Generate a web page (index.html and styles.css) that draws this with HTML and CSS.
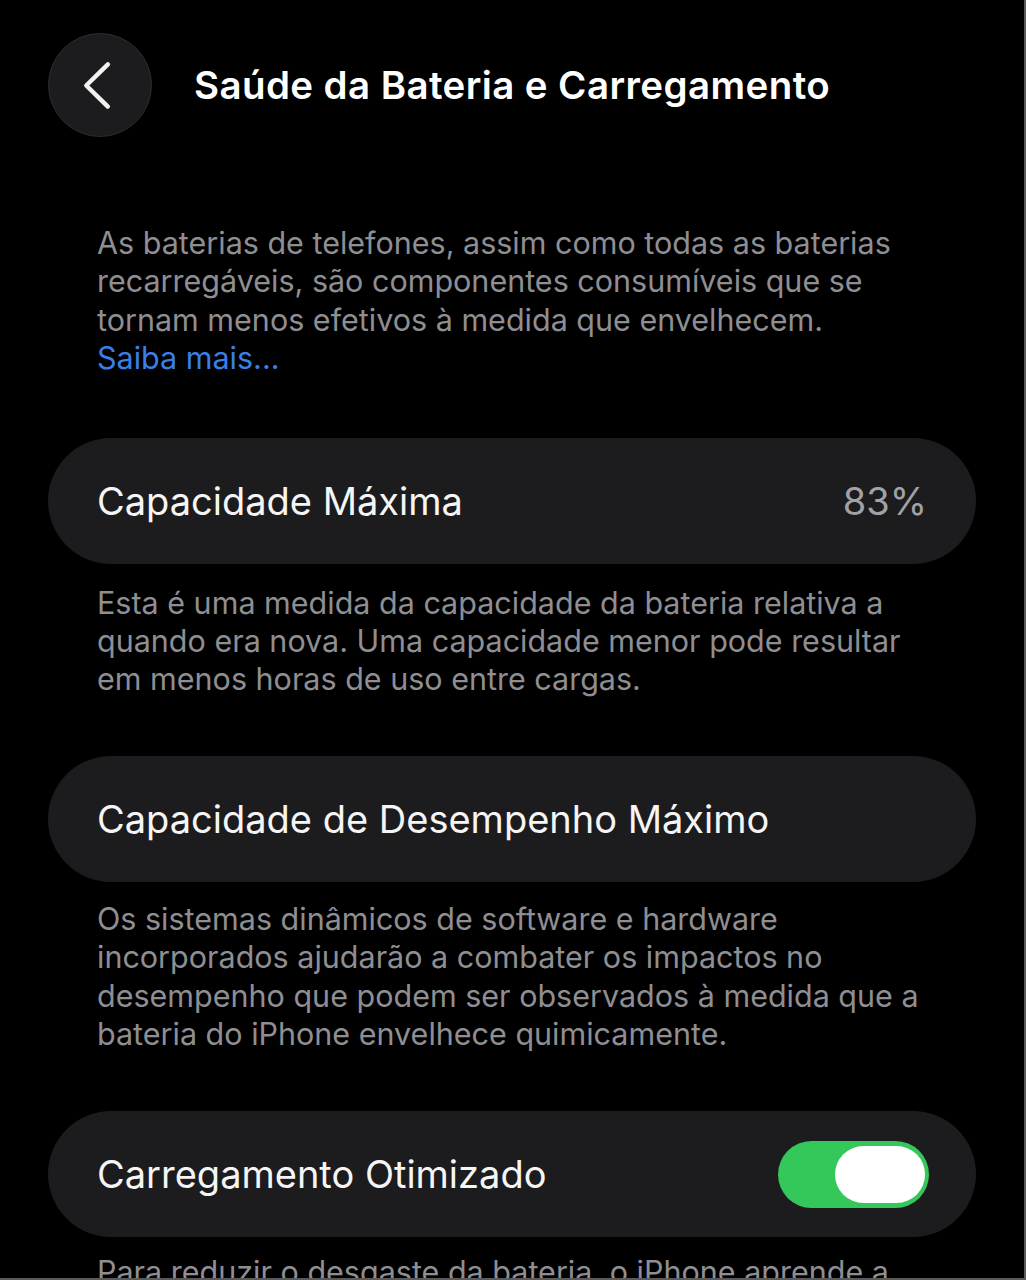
FILE: index.html
```html
<!DOCTYPE html>
<html lang="pt">
<head>
<meta charset="utf-8">
<link rel="stylesheet" href="styles.css">
</head>
<body>
<div class="screen">
  <header class="header">
    <button class="back" aria-label="Voltar">
      <svg width="104" height="104" viewBox="0 0 104 104"><path d="M60 31 L38 52.5 L60 74" fill="none" stroke="#f2f2f2" stroke-width="4.5" stroke-linecap="round" stroke-linejoin="round"/></svg>
    </button>
    <h1 class="title">Saúde da Bateria e Carregamento</h1>
  </header>

  <p class="note intro">As baterias de telefones, assim como todas as baterias recarregáveis, são componentes consumíveis que se tornam menos efetivos à medida que envelhecem. <span class="link">Saiba mais...</span></p>

  <div class="card c1">
    <span class="label">Capacidade Máxima</span>
    <span class="value">83%</span>
  </div>
  <p class="note n1">Esta é uma medida da capacidade da bateria relativa a quando era nova. Uma capacidade menor pode resultar em menos horas de uso entre cargas.</p>

  <div class="card c2">
    <span class="label">Capacidade de Desempenho Máximo</span>
  </div>
  <p class="note n2">Os sistemas dinâmicos de software e hardware incorporados ajudarão a combater os impactos no desempenho que podem ser observados à medida que a bateria do iPhone envelhece quimicamente.</p>

  <div class="card c3">
    <span class="label">Carregamento Otimizado</span>
    <span class="toggle"><span class="knob"></span></span>
  </div>
  <p class="note n3">Para reduzir o desgaste da bateria, o iPhone aprende a sua rotina diária de carregamento para esperar até que você precise usá-lo.</p>
</div>
</body>
</html>
```
FILE: styles.css
```css
html, body {
  margin: 0;
  padding: 0;
  background: #000;
}
.screen {
  width: 928px;
  height: 1278px;
  padding: 0 48px;
  border-right: 2px solid #5a5a5a;
  border-bottom: 2px solid #5a5a5a;
  overflow: hidden;
  background: #000;
  font-family: Inter, "Noto Sans", sans-serif;
}
.header {
  display: flex;
  align-items: center;
  gap: 42px;
  padding-top: 33px;
  height: 104px;
}
.back {
  width: 104px;
  height: 104px;
  border-radius: 50%;
  background: #1c1c1e;
  border: 1px solid #2c2c2e;
  padding: 0;
  margin: 0;
  display: flex;
  align-items: center;
  justify-content: center;
  flex: none;
  box-sizing: border-box;
}
.back svg { display: block; }
.title {
  margin: 0;
  color: #fff;
  font-size: 38.5px;
  font-weight: 600;
  letter-spacing: 0.4px;
}
.note {
  margin: 0;
  padding: 0 40px 0 49px;
  color: #8e8e93;
  font-size: 30.5px;
  line-height: 38.4px;
  letter-spacing: 0;
}
.intro { margin-top: 87px; }
.link { color: #3a7fe8; display: block; }
.card {
  height: 126px;
  border-radius: 63px;
  background: #1c1c1e;
  display: flex;
  align-items: center;
  justify-content: space-between;
  padding: 0 49px;
  color: #f5f5f5;
  font-size: 38px;
  letter-spacing: 0;
}
.c1 { margin-top: 60px; }
.n1 { margin-top: 20px; }
.c2 { margin-top: 57px; }
.n2 { margin-top: 18px; }
.c3 { margin-top: 58px; }
.n3 { margin-top: 16px; }
.value { color: #a1a1a6; }
.toggle {
  width: 151px;
  height: 67px;
  border-radius: 34px;
  background: #34c759;
  display: flex;
  align-items: center;
  justify-content: flex-end;
  padding: 0 4px;
  box-sizing: border-box;
  margin-right: -2px;
}
.knob {
  width: 90px;
  height: 57px;
  border-radius: 29px;
  background: #fff;
}
```
